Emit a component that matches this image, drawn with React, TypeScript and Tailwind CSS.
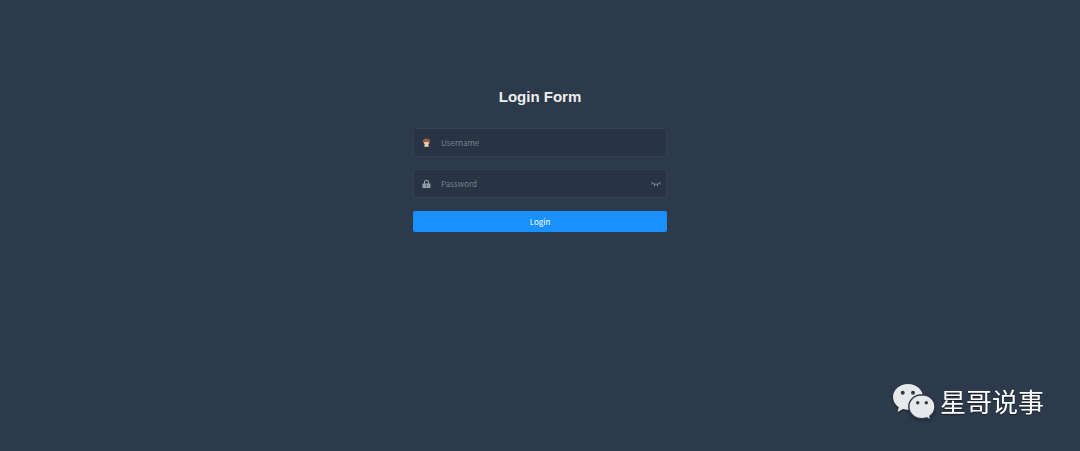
import { useState } from 'react';

const UserIcon = () => (
  <svg viewBox="0 0 18 18" className="size-[9px] shrink-0" aria-hidden="true">
    <path d="M3 17.500c0-2 2-3 4-3.300h4c2 .3 4 1.300 4 3.300z" fill="#8a7568" />
    <path d="M6 12h6l1 5H5z" fill="#ece6e0" />
    <path d="M3.500 6h11v3c0 3-2.500 5.500-5.500 5.500S3.500 12 3.500 9z" fill="#efc9a6" />
    <path d="M1.500 7c0-3.500 3-6 7.500-6s7.500 2.500 7.500 6c0 2.500-1 3-2.500 3L13 8H5l-1 2C2.500 10 1.500 9.500 1.500 7z" fill="#94604a" />
  </svg>
);

const LockIcon = () => (
  <svg viewBox="0 0 18 18" className="size-[9px] shrink-0" aria-hidden="true">
    <path d="M5 10V6.500a4 4 0 0 1 8 0V10" fill="none" stroke="#93a0ac" strokeWidth="2.200" />
    <rect x="1" y="9" width="16" height="9" rx="1" fill="#93a0ac" />
    <path d="M8 11.500h2V15H8z" fill="#3b4856" />
  </svg>
);

const EyeClosedIcon = () => (
  <svg viewBox="0 0 20 12" className="w-[10px] h-[6px]" aria-hidden="true">
    <path
      d="M1 2c2 3 5 4.500 9 4.500S17 5 19 2M3.500 4.500 1 7M7.500 6.500 6.500 10.500M12.500 6.500l1 4M16.500 4.500 19 7"
      fill="none"
      stroke="#8b98a5"
      strokeWidth="1.800"
    />
  </svg>
);

const WechatIcon = () => (
  <svg viewBox="0 0 42 36" className="w-[42px] h-9 drop-shadow-[0_1px_1px_rgba(0,0,0,0.4)]" aria-hidden="true">
    <path
      d="M15 0C6.700 0 0 5.700 0 13c0 4.200 2.200 7.700 5.800 10.200L4.500 28l5.500-2.900c1.600.5 3.300.8 5.400.8C23.500 25.900 30 20.200 30 13S23.300 0 15 0z"
      fill="#e7e8ea"
    />
    <path
      d="M29 10.800c-7.400 0-13.200 5.200-13.200 12S21.600 34.700 29 34.700c1.600 0 3.200-.3 4.600-.8l4.500 2.300-1.200-4c3.100-2.200 5.100-5.500 5.100-9.400 0-6.800-5.700-12-13-12z"
      fill="#e7e8ea"
      stroke="#2d3a4b"
      strokeWidth="1.500"
    />
    <g fill="#2d3a4b">
      <circle cx="9.700" cy="8.700" r="2" />
      <circle cx="20" cy="8.700" r="2" />
      <circle cx="24.700" cy="18.800" r="1.700" />
      <circle cx="33.300" cy="18.800" r="1.700" />
    </g>
  </svg>
);

const fieldClass =
  'flex items-center h-[29px] mb-3 pl-2 pr-[5px] rounded-[3px] border border-[#344150] bg-[#283443]';
const inputClass =
  'flex-1 min-w-0 h-full ml-[10px] bg-transparent text-[8px] text-white outline-none placeholder:text-[#76808b]';

const App = () => {
  const [visible, setVisible] = useState(false);

  return (
    <main className="min-h-screen bg-[#2d3a4b] font-['Noto_Sans_CJK_SC',sans-serif]">
      <form className="w-full max-w-[254px] mx-auto pt-[87px]" onSubmit={(e) => e.preventDefault()}>
        <h1 className="mb-[21px] text-center text-[15px] leading-5 font-bold text-[#eeeeee] font-['Liberation_Sans',sans-serif]">
          Login Form
        </h1>
        <div className={fieldClass}>
          <label htmlFor="username">
            <UserIcon />
          </label>
          <input id="username" type="text" placeholder="Username" aria-label="Username" className={inputClass} />
        </div>
        <div className={fieldClass}>
          <label htmlFor="password">
            <LockIcon />
          </label>
          <input
            id="password"
            type={visible ? 'text' : 'password'}
            placeholder="Password"
            aria-label="Password"
            className={inputClass}
          />
          <button type="button" aria-label="Show password" onClick={() => setVisible(!visible)}>
            <EyeClosedIcon />
          </button>
        </div>
        <button type="submit" className="block w-full h-[21px] mt-[13px] rounded-[2px] bg-[#1890ff] text-[8px] text-white">
          Login
        </button>
      </form>
      <div className="fixed right-9 bottom-[31px] flex items-start gap-[5px]">
        <WechatIcon />
        <span className="text-[26px] leading-[34px] text-white [text-shadow:0_1px_1px_rgba(0,0,0,0.5)]">
          星哥说事
        </span>
      </div>
    </main>
  );
};

export default App;
